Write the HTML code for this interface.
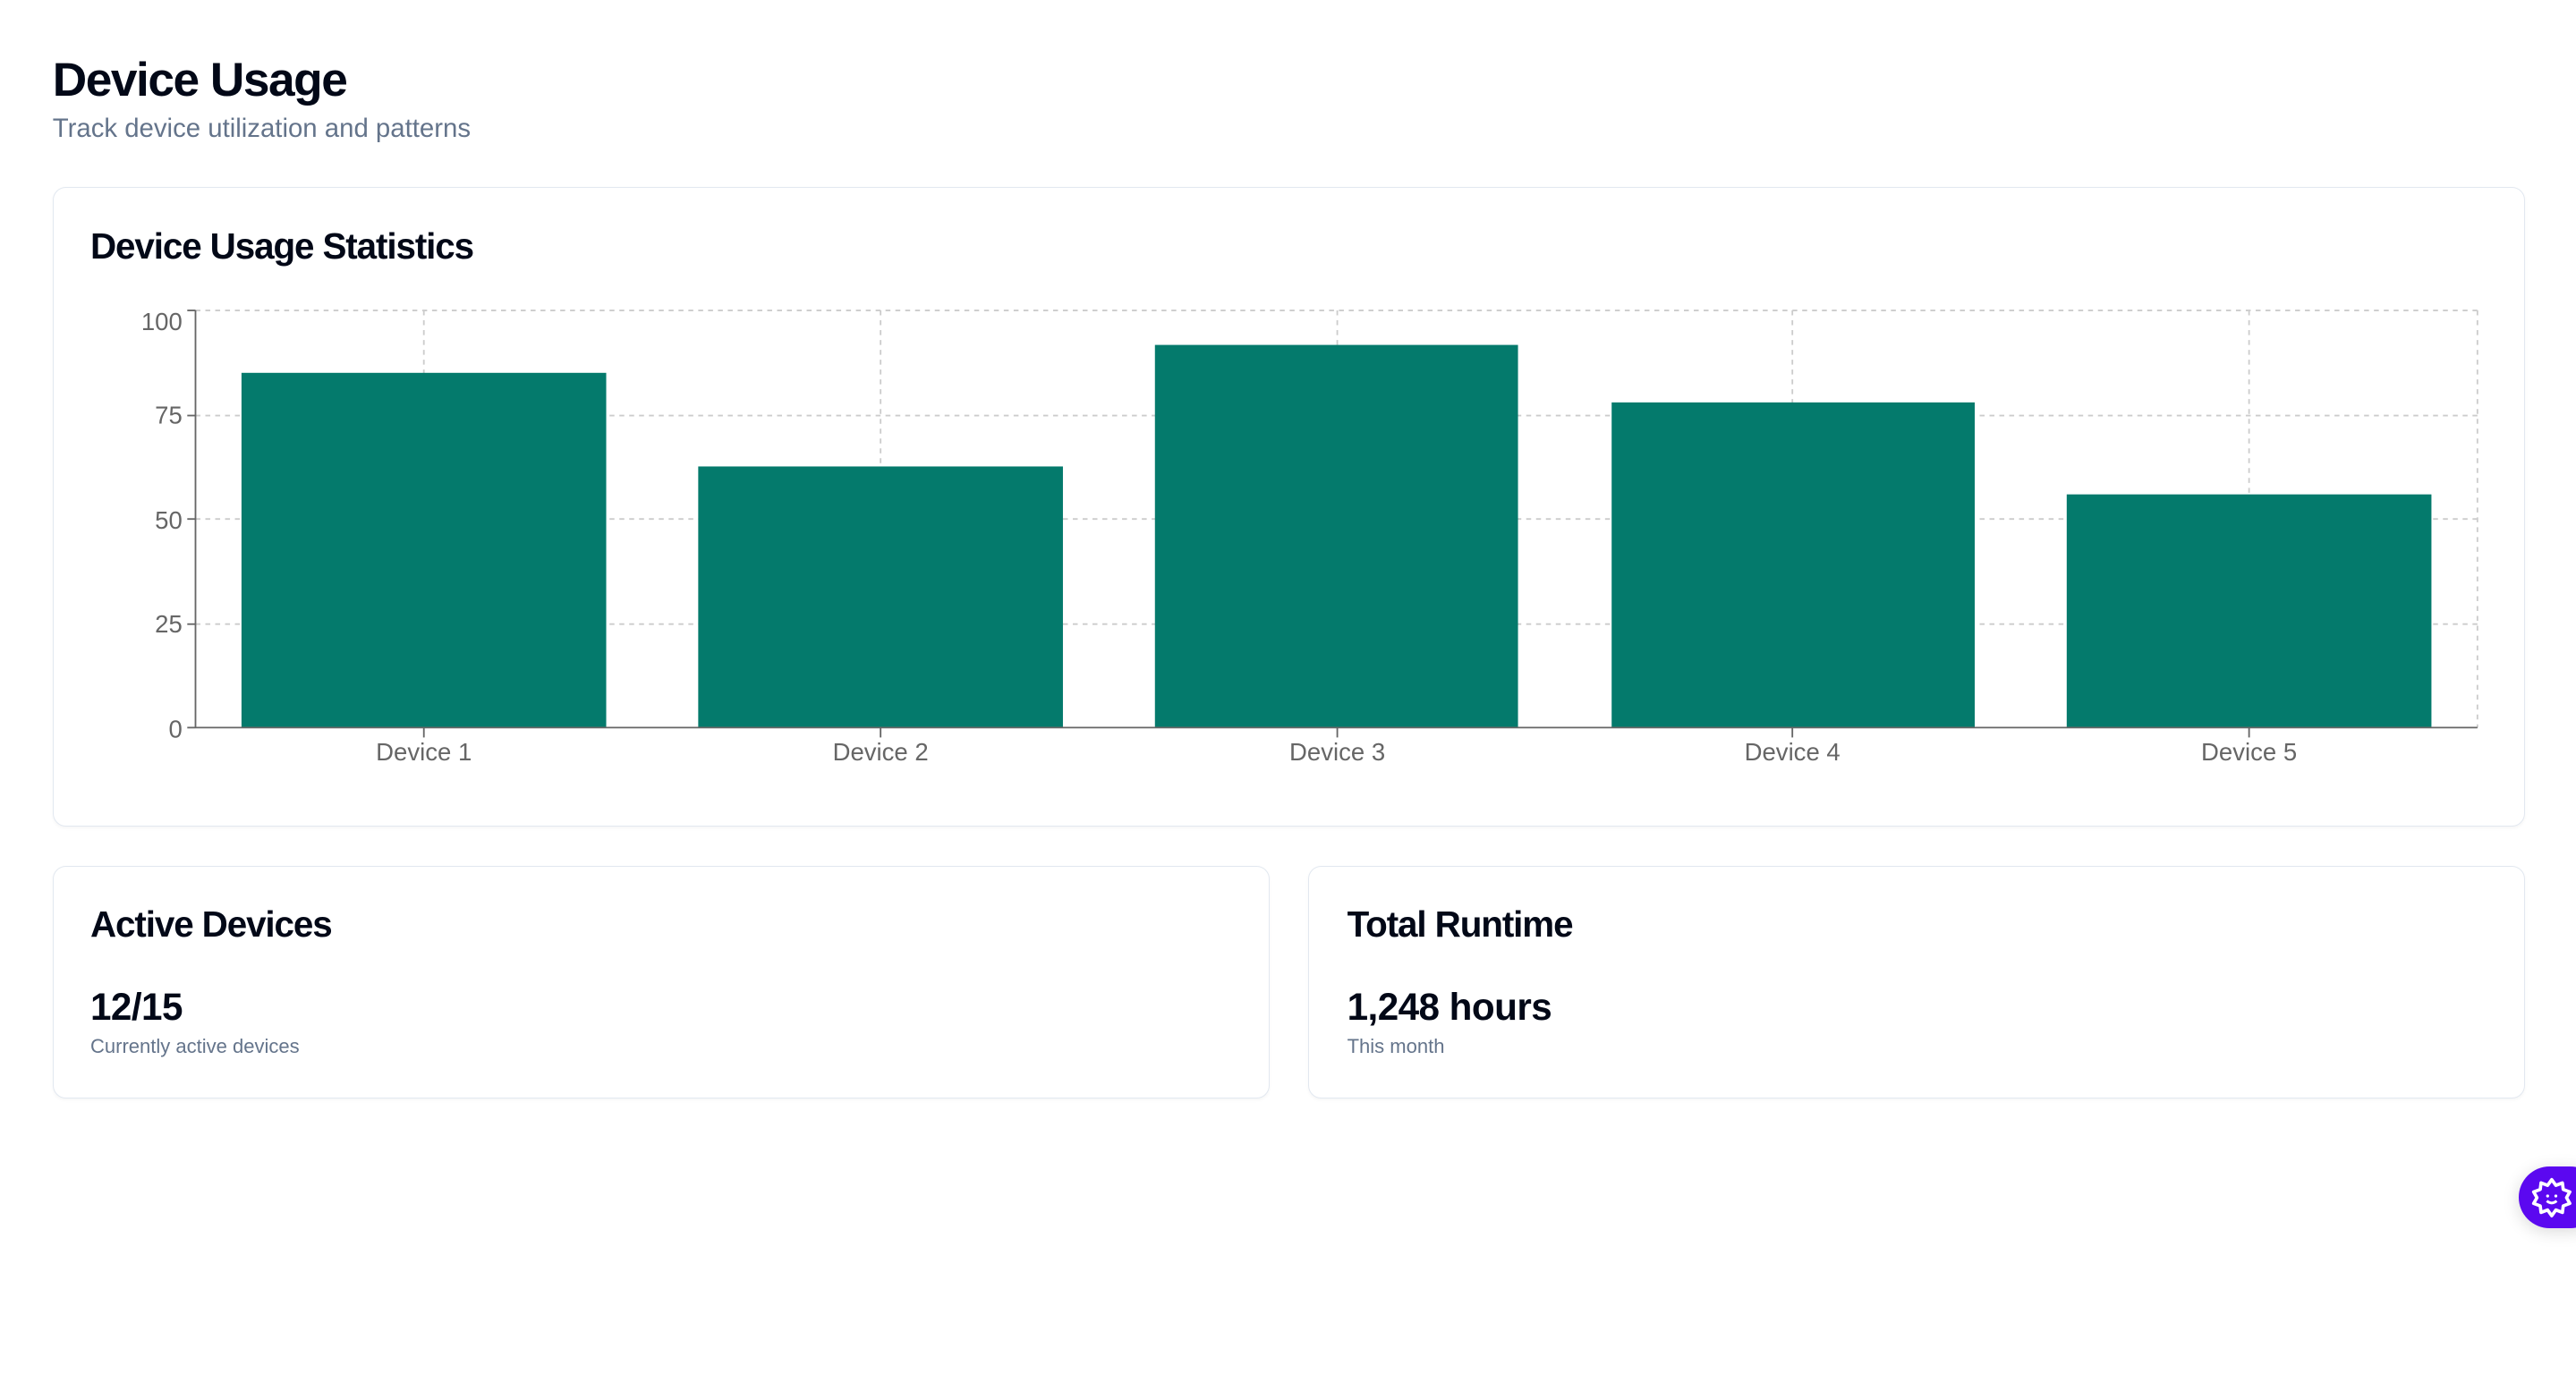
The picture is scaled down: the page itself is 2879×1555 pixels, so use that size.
<!DOCTYPE html>
<html><head><meta charset="utf-8"><style>
html,body{margin:0;padding:0;background:#fff;}
body{width:1568px;height:847px;zoom:1.83610;position:relative;overflow:hidden;font-family:"Liberation Sans",sans-serif;color:#020817;}
.a{position:absolute;white-space:nowrap;}
.card{position:absolute;border:1px solid #e2e8f0;border-radius:8px;box-sizing:border-box;background:#fff;box-shadow:0 1px 2px rgba(0,0,0,0.04);}
h1{position:absolute;margin:0;left:32px;top:32px;font-size:29px;font-weight:bold;letter-spacing:-0.8px;}
.t{font-size:22px;font-weight:bold;letter-spacing:-0.6px;}
.v{font-size:23px;font-weight:bold;letter-spacing:-0.3px;}
.c{font-size:12px;color:#64748b;}
</style></head><body>
<h1>Device Usage</h1>
<div class="a" style="left:32px;top:69px;font-size:16px;color:#64748b;">Track device utilization and patterns</div>
<div class="card" style="left:32px;top:114px;width:1505px;height:389px;"></div>
<div class="a t" style="left:55px;top:137px;">Device Usage Statistics</div>
<svg class="a" style="left:0;top:0" width="1568" height="520">
<g stroke="#ccc" stroke-dasharray="3 3" stroke-width="1" fill="none">
<line x1="119" y1="189" x2="1508" y2="189"/><line x1="119" y1="253" x2="1508" y2="253"/>
<line x1="119" y1="316" x2="1508" y2="316"/><line x1="119" y1="380" x2="1508" y2="380"/>
<line x1="258" y1="189" x2="258" y2="443"/><line x1="536" y1="189" x2="536" y2="443"/>
<line x1="814" y1="189" x2="814" y2="443"/><line x1="1091" y1="189" x2="1091" y2="443"/>
<line x1="1369" y1="189" x2="1369" y2="443"/><line x1="1508" y1="189" x2="1508" y2="443"/>
</g>
<g fill="#047a6c">
<rect x="147" y="227" width="222" height="216"/><rect x="425" y="284" width="222" height="159"/>
<rect x="703" y="210" width="221" height="233"/><rect x="981" y="245" width="221" height="198"/>
<rect x="1258" y="301" width="222" height="142"/>
</g>
<g stroke="#666" stroke-width="1">
<line x1="119" y1="189" x2="119" y2="443"/><line x1="119" y1="443" x2="1508" y2="443"/>
<line x1="114" y1="189" x2="119" y2="189"/><line x1="114" y1="253" x2="119" y2="253"/><line x1="114" y1="316" x2="119" y2="316"/><line x1="114" y1="380" x2="119" y2="380"/><line x1="114" y1="443" x2="119" y2="443"/>
<line x1="258" y1="443" x2="258" y2="449"/><line x1="536" y1="443" x2="536" y2="449"/><line x1="814" y1="443" x2="814" y2="449"/><line x1="1091" y1="443" x2="1091" y2="449"/><line x1="1369" y1="443" x2="1369" y2="449"/>
</g>
<g font-family="Liberation Sans" font-size="15" fill="#666" text-anchor="end">
<text x="111" y="201">100</text><text x="111" y="258">75</text><text x="111" y="322">50</text><text x="111" y="385">25</text><text x="111" y="449">0</text>
</g>
<g font-family="Liberation Sans" font-size="15" fill="#666" text-anchor="middle">
<text x="258" y="463">Device 1</text><text x="536" y="463">Device 2</text><text x="814" y="463">Device 3</text><text x="1091" y="463">Device 4</text><text x="1369" y="463">Device 5</text>
</g>
</svg>
<div class="card" style="left:32px;top:527px;width:741px;height:142px;"></div>
<div class="a t" style="left:55px;top:550px;">Active Devices</div>
<div class="a v" style="left:55px;top:600px;">12/15</div>
<div class="a c" style="left:55px;top:630px;">Currently active devices</div>
<div class="card" style="left:796px;top:527px;width:741px;height:142px;"></div>
<div class="a t" style="left:820px;top:550px;">Total Runtime</div>
<div class="a v" style="left:820px;top:600px;">1,248 hours</div>
<div class="a c" style="left:820px;top:630px;">This month</div>
<div class="a" style="left:1533px;top:710px;width:50px;height:38px;border-radius:19px;background:#5b08f0;box-shadow:0 2px 10px rgba(0,0,0,0.15);">
<svg width="38" height="38" viewBox="0 0 38 38" style="position:absolute;left:1px;top:0"><path d="M19 8 L21.5 11.5 L25.5 10 L26 14 L30 15.5 L28 19 L30 22.5 L26 24 L25.5 28 L21.5 26.5 L19 30 L16.5 26.5 L12.5 28 L12 24 L8 22.5 L10 19 L8 15.5 L12 14 L12.5 10 L16.5 11.5 Z" fill="none" stroke="#fff" stroke-width="2" stroke-linejoin="round"/><path d="M16 21 q3 2.5 6 0" stroke="#fff" stroke-width="1.6" fill="none"/><circle cx="16.5" cy="18" r="0.9" fill="#fff"/><circle cx="21.5" cy="18" r="0.9" fill="#fff"/></svg>
</div>
</body></html>
